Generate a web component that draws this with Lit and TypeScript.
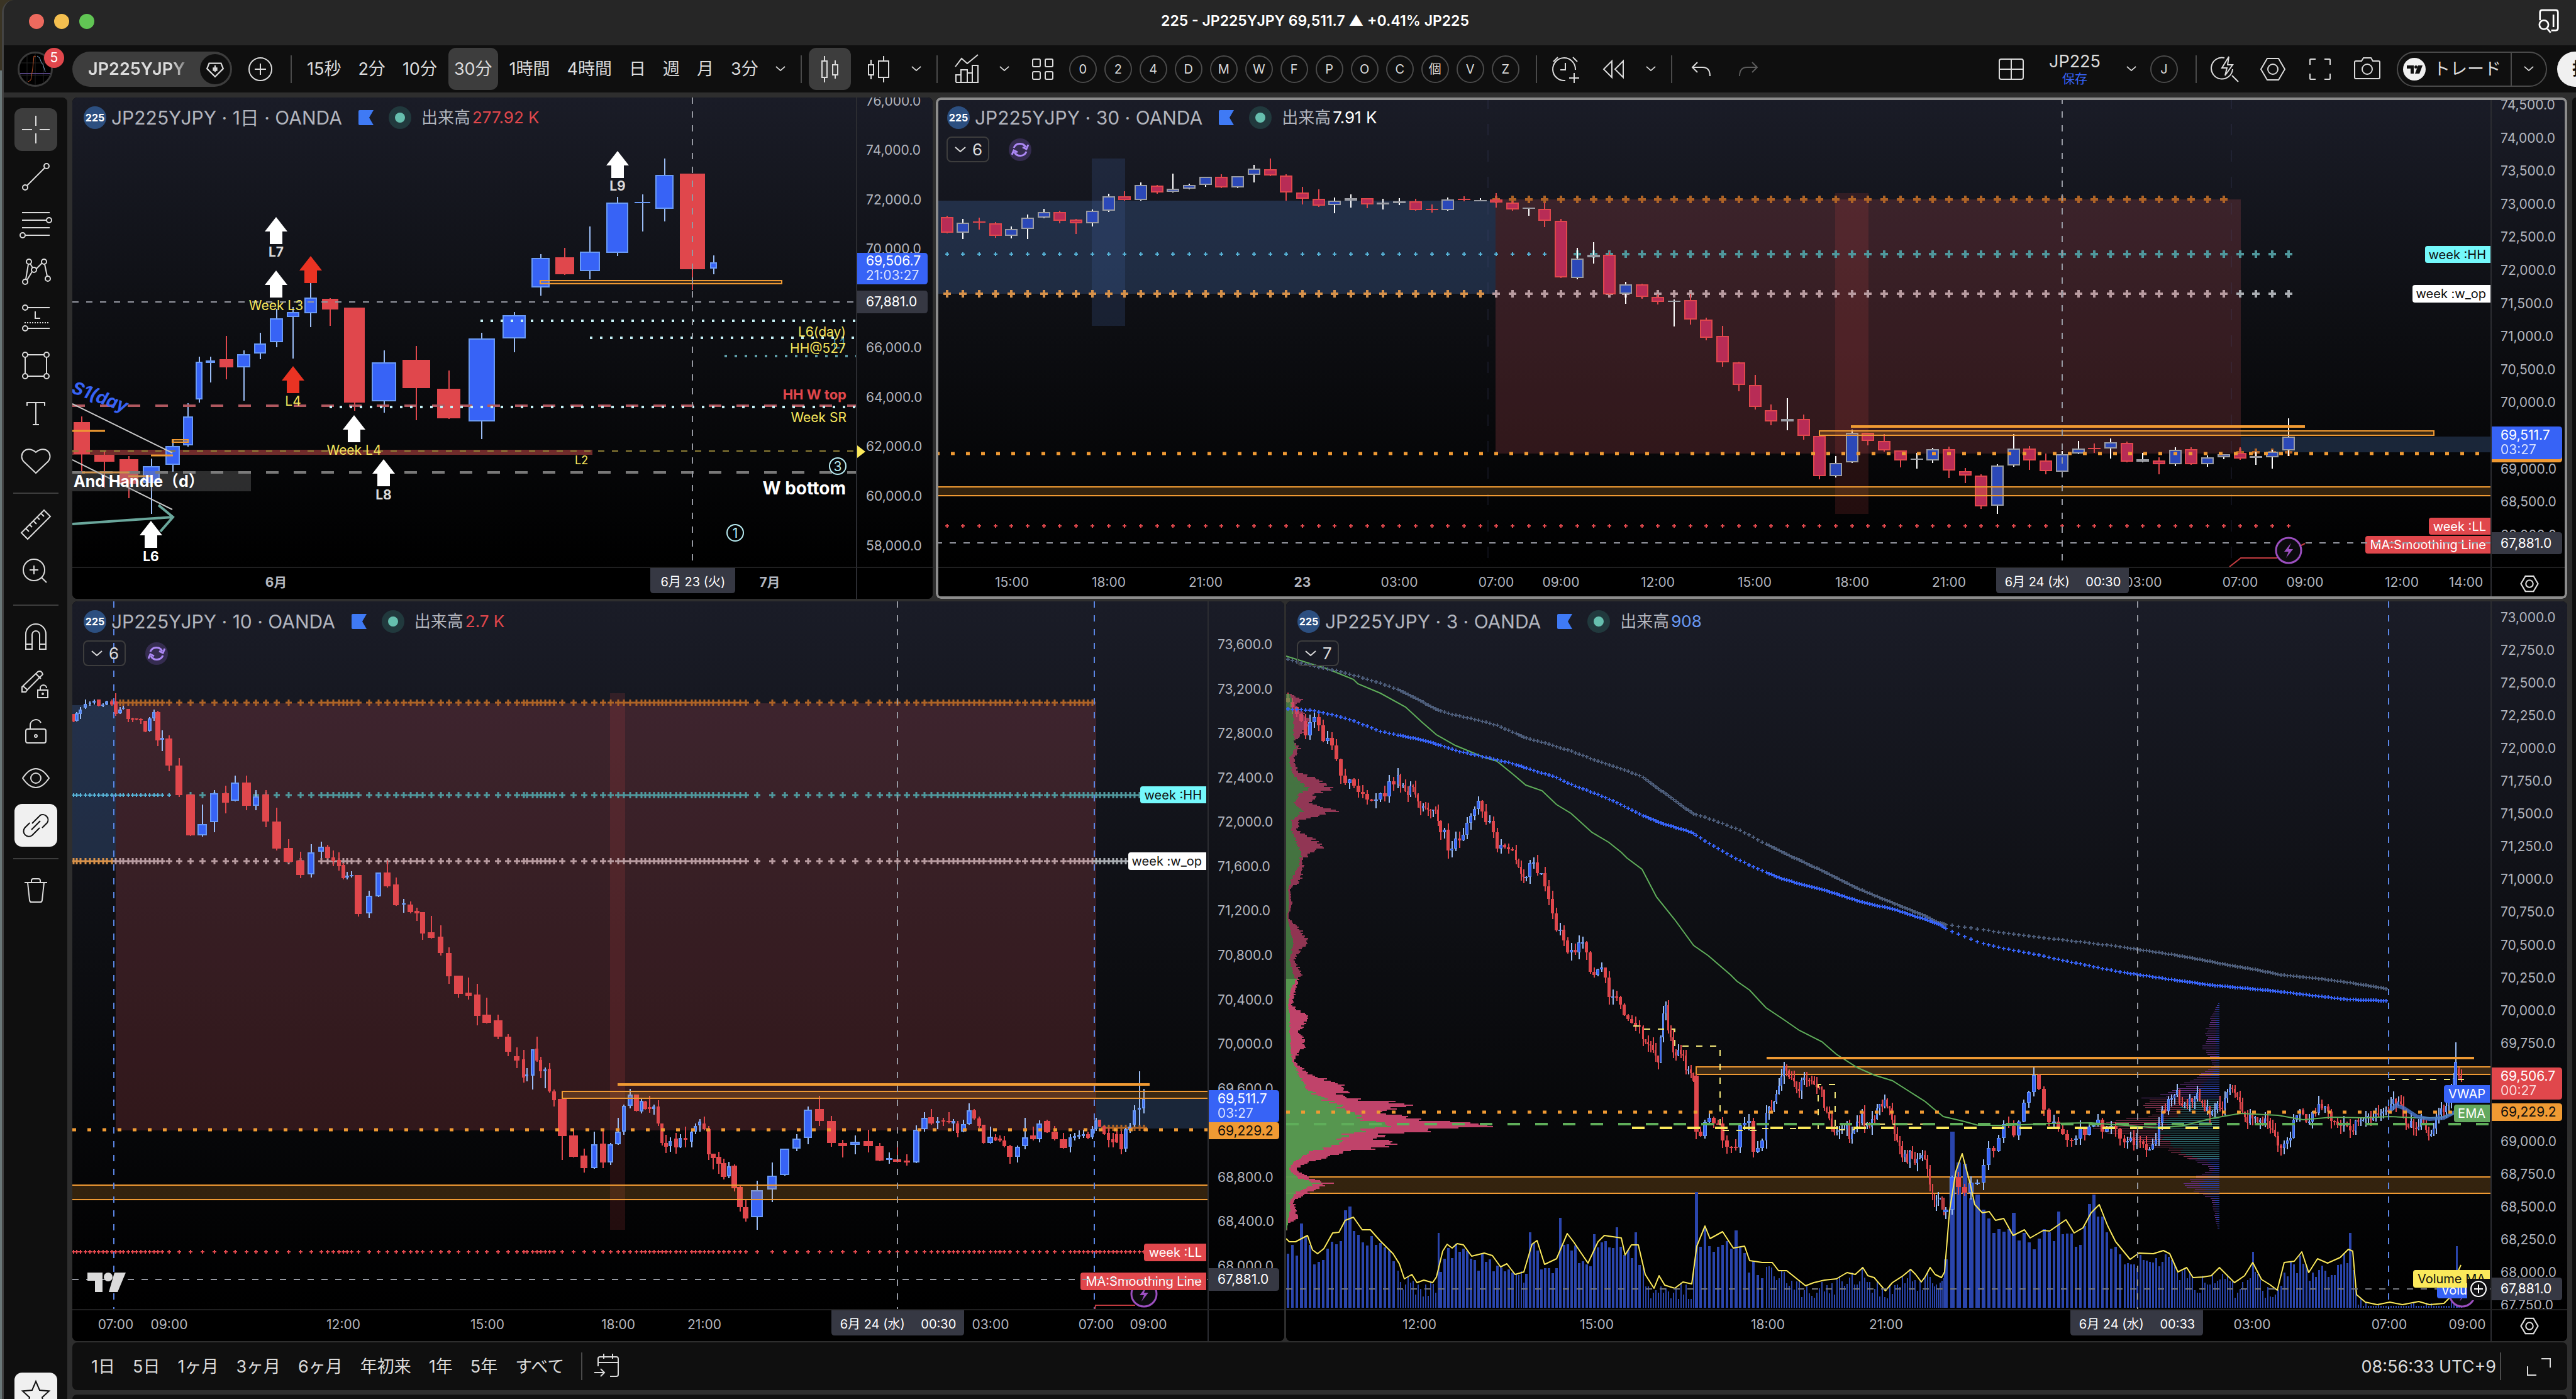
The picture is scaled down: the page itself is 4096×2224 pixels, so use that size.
import { LitElement, html, svg, css, nothing } from "lit";
import { customElement, property } from "lit/decorators.js";

/* ---------- scales and path helpers ---------- */

type Scale = (v: number) => number;
const lin = (a: number, b: number): Scale => (v) => Math.round(a + b * v);

const topY = lin(-16, 0.5197);
const lowY = lin(-12, 0.8163);

const dayA = lin(-15.6, 0.4436);
const dayB = lin(660.1, 0.4563);
const m30A = lin(-6.4, 0.8365);
const m30B = lin(1295.4, 0.8378);
const m10A = lin(-15.6, 0.6337);
const m10B = lin(928.4, 0.6401);
const m3A = lin(-7.9, 0.6591);
const m3B = lin(1015.6, 0.6604);

interface Candle { x: number; w: number; top: number; bot: number; hi: number; lo: number; kind: string; }

const nums = (s: string) => s.trim().split(/[\s,]+/).map(Number);

/* rows: kind left right top bottom high low */
function spanCandles(rows: string, x: Scale, y: Scale): Candle[] {
  return rows.trim().split(";").map((r) => {
    const [kind, ...p] = r.trim().split(" ");
    const [l, rt, t, b, h, lo] = p.map(Number);
    const left = x(l), right = x(rt);
    return { x: Math.round((left + right) / 2), w: right - left, top: y(t), bot: y(b), hi: y(h), lo: y(lo), kind };
  });
}

/* rows: kind centre half-width top bottom [high low] */
function midCandles(rows: string, x: Scale, y: Scale, k: number): Candle[] {
  return rows.trim().split(";").map((r) => {
    const [kind, ...p] = r.trim().split(" ");
    const [c, hw, t, b, h = t, lo = b] = p.map(Number);
    return { x: x(c), w: Math.max(3, Math.round(hw * 2 * k)), top: y(t), bot: y(b), hi: y(h), lo: y(lo), kind };
  });
}

const box = (x: number, y: number, w: number, h: number) => `M${x} ${y}h${w}v${h}h${-w}z`;

function drawCandles(list: Candle[], kind: string, cls: string, edge: number) {
  let wick = "", body = "", core = "";
  for (const c of list) {
    if (c.kind !== kind) continue;
    const l = c.x - Math.round(c.w / 2);
    const h = Math.max(2, c.bot - c.top);
    wick += box(c.x - 1, c.hi, 2, Math.max(1, c.top - c.hi)) + box(c.x - 1, c.bot, 2, Math.max(1, c.lo - c.bot));
    body += box(l, c.top, c.w, h);
    if (edge && h > edge * 2 && c.w > edge * 2) core += box(l + edge, c.top + edge, c.w - edge * 2, h - edge * 2);
  }
  return svg`<path class="${cls}-wick" d=${wick}></path><path class="${cls}-edge" d=${body}></path><path class="${cls}-core" d=${core}></path>`;
}

const plus = (xs: number[], y: number, r: number) => xs.map((x) => `M${x - r} ${y}h${2 * r}M${x} ${y - r}v${2 * r}`).join("");
const pairs = (s: string, x: Scale, y: Scale): [number, number][] => {
  const n = nums(s);
  const out: [number, number][] = [];
  for (let i = 0; i < n.length; i += 2) out.push([x(n[i]), y(n[i + 1])]);
  return out;
};
const poly = (p: [number, number][]) => p.map(([x, y]) => `${x},${y}`).join(" ");
function at(p: [number, number][], x: number) {
  for (let i = 1; i < p.length; i++) {
    if (x <= p[i][0]) {
      const [x0, y0] = p[i - 1], [x1, y1] = p[i];
      return y0 + ((y1 - y0) * (x - x0)) / Math.max(1, x1 - x0);
    }
  }
  return p[p.length - 1][1];
}
const noise = (i: number) => {
  const v = Math.sin(i * 127.1 + 11.7) * 43758.5453;
  return v - Math.floor(v);
};

const text = (x: number, y: number, s: string, cls = "", anchor = "start") =>
  svg`<text x=${x} y=${y} class=${cls} text-anchor=${anchor}>${s}</text>`;
const hline = (x1: number, x2: number, y: number, cls: string) => svg`<line x1=${x1} x2=${x2} y1=${y} y2=${y} class=${cls}></line>`;
const vline = (x: number, cls: string) => svg`<line x1=${x} x2=${x} y1="0" y2="100%" class=${cls}></line>`;
const rect = (x1: number, y1: number, x2: number, y2: number, cls: string) =>
  svg`<rect x=${x1} y=${y1} width=${x2 - x1} height=${y2 - y1} class=${cls}></rect>`;
function tag(right: number, y1: number, w: number, h: number, s: string, cls: string) {
  return svg`<path class=${cls} d="M${right} ${y1}v${h}h${4 - w}q-4 0 -4 -4v${8 - h}q0 -4 4 -4z"></path>${text(right - 7, y1 + Math.round(h / 2) + 7, s, cls + "-t f20", "end")}`;
}
const arrow = (x: number, y: number, cls: string) =>
  svg`<path class=${cls} d="M${x} ${y}l18 23h-8v20h-20v-20h-8z"></path>`;
const bolt = (x: number, y: number) =>
  svg`<g class="bolt"><circle cx=${x} cy=${y} r="20"></circle><path d="M${x + 4} ${y - 12}l-11 14h7l-4 10l11 -14h-7z"></path></g>`;

const FAR = 4000;

/* ---------- day chart ---------- */

const day = [
  ...spanCandles(`r 40 99 1023 1121 1006 1175;r 114 186 1124 1145 1112 1224;r 204 271 1138 1212 1128 1256;b 288 348 1158 1211 1136 1304;b 368 420 1097 1154 1075 1176;b 433 467 1007 1095 966 1098;b 476 501 839 955 824 964;b 514 548 835 842 824 903;r 562 612 832 857 761 893;b 626 673 816 856 805 958;b 686 729 783 814 750 832;b 742 790 707 779 677 795;b 803 850 686 703 672 830;b 866 913 643 691 599 734;r 930 988 646 679 644 729;r 1008 1084 673 964 673 989;b 1108 1195 840 961 805 994;r 1219 1317 834 920 790 1017;r 1342 1427 922 1013 866 1015;b 1455 1551 768 1022 751 1075`, dayA, topY),
  ...spanCandles(`b 53 134 697 768 686 811;b 153 217 521 611 509 637;r 237 303 520 572 491 572;b 321 393 502 561 425 587;b 415 491 353 506 335 516;b 512 568 351 353 327 440;b 585 648 267 372 218 409;r 671 758 264 556 264 620;b 776 800 535 554 514 572`, dayB, topY),
];

function dayPlot() {
  const x = dayA, z = dayB, y = topY;
  return svg`
    ${rect(0, y(1109), z(366), y(1123), "redband")}
    ${drawCandles(day, "r", "red", 0)}${drawCandles(day, "b", "blue", 2)}
    ${hline(0, FAR, y(973), "rose")}
    ${hline(x(958), FAR, y(977), "dots ice")}
    ${hline(x(1499), FAR, y(713), "dots ice")}
    ${hline(z(358), FAR, y(765), "dots ice")}
    ${hline(z(825), FAR, y(822), "dots teal")}
    ${hline(0, FAR, y(1113), "gold")}
    ${hline(0, FAR, y(1178), "thick")}
    ${hline(x(36), x(152), y(1051), "orange")}${hline(x(68), x(240), y(1178), "orange")}
    ${hline(x(235), x(320), y(1190), "orange")}${hline(x(316), x(395), y(1125), "orange")}
    ${rect(x(394), y(1077), x(450), y(1086), "obox")}
    <polyline class="trend" points="0,${y(968)} ${x(394)},${y(1118)}"></polyline>
    <polyline class="trend" points="0,${y(1140)} ${x(394)},${y(1292)}"></polyline>
    <path class="mint" d="M0 ${y(1335)}L${x(395)} ${y(1315)}M${x(343)} ${y(1278)}L${x(395)} ${y(1315)}L${x(350)} ${y(1358)}"></path>
    ${rect(0, y(1174), x(676), y(1235), "note")}
    ${text(2, y(1222), "And Handle（d）", "white bold f25")}
    <text x="-3" y=${y(936)} class="s1" transform="rotate(20 0 ${y(936)})">S1(day</text>
    ${rect(z(184), y(590), z(1025), y(601), "obox")}
    ${hline(0, FAR, y(656), "cross")}${vline(z(714), "cross")}
    ${arrow(x(766), y(397), "wfill")}${text(x(766), y(518), "L7", "soft bold", "middle")}
    ${arrow(x(766), y(559), "wfill")}${text(x(766), y(682), "Week L3", "yellow", "middle")}
    ${arrow(x(889), y(515), "rfill")}
    ${arrow(x(826), y(852), "rfill")}${text(x(826), y(973), "L4", "yellow", "middle")}
    ${arrow(x(1046), y(1003), "wfill")}${text(x(1046), y(1124), "Week L4", "yellow", "middle")}
    ${arrow(x(1151), y(1138), "wfill")}${text(x(1151), y(1261), "L8", "soft bold", "middle")}
    ${arrow(x(318), y(1326), "wfill")}${text(x(318), y(1448), "L6", "white bold", "middle")}
    ${arrow(z(453), y(194), "wfill")}${text(z(453), y(316), "L9", "soft bold", "middle")}
    ${text(z(1247), y(798), "L1", "tealt", "end")}
    ${text(z(1250), y(762), "L6(day)", "yellow", "end")}
    ${text(z(1250), y(812), "HH@527", "yellow", "end")}
    ${text(z(1251), y(955), "HH W top", "redt bold f22", "end")}
    ${text(z(1251), y(1024), "Week SR", "yellow", "end")}
    ${text(z(304), y(1153), "L2", "yellow f18")}
    ${text(z(1248), y(1244), "W bottom", "white bold f28", "end")}
    <circle class="ring" cx=${z(1221)} cy=${y(1159)} r="13"></circle>${text(z(1221), y(1174), "3", "icet", "middle")}
    <circle class="ring" cx=${z(864)} cy=${y(1363)} r="13"></circle>${text(z(864), y(1378), "1", "icet", "middle")}`;
}

/* ---------- 30 minute chart ---------- */

const m30x = (i: number) => Math.round(17.5 + 25.7 * i);
const m30 = `r 397 444 392 444;b 413 444 403 463;r 409 412 398 434;r 416 454 411 459;b 433 454 425 461;b 399 432 388 463;b 381 399 371 399;r 381 408 378 415;r 405 416 402 448;b 378 416 374 426;b 332 378 325 381;r 332 345 317 345;b 299 344 291 344;r 301 322 298 325;b 310 320 264 322;b 299 310 294 310;b 273 299 273 304;r 273 306 266 306;b 271 305 271 305;b 248 268 237 290;r 250 270 218 270;r 270 322 266 347;r 322 341 304 358;r 341 362 312 366;b 347 360 337 384;b 339 347 327 367;r 338 358 338 369;g 353 358 340 373;g 349 355 338 360;r 349 376 340 376;r 371 374 358 382;b 343 376 337 376;r 340 343 333 348;g 345 347 338 347;r 343 353 323 367;r 353 374 346 377;g 367 369 367 392;r 372 408 352 428;r 408 582 402 582;b 523 583 491 587;b 512 520 474 539;r 512 633 502 633;b 603 632 595 662;r 603 641 600 646;r 641 657 633 664;g 653 657 648 732;r 651 710 632 725;r 710 765 704 774;r 760 840 730 855;r 840 911 838 929;r 911 978 880 985;r 988 1022 969 1034;b 1014 1022 950 1048;r 1014 1066 1000 1078;r 1066 1190 1066 1198;b 1148 1190 1127 1193;b 1057 1146 1046 1149;r 1057 1081 1057 1094;r 1081 1110 1060 1115;r 1110 1141 1110 1163;g 1136 1139 1117 1166;b 1107 1141 1102 1149;r 1107 1171 1098 1195;r 1173 1187 1165 1210;r 1188 1282 1184 1289;b 1156 1280 1153 1304;b 1104 1156 1060 1160;r 1104 1142 1096 1170;r 1141 1173 1120 1184;b 1122 1175 1112 1175;b 1104 1120 1082 1120;r 1102 1104 1089 1118;b 1085 1104 1073 1136;r 1087 1144 1084 1144;g 1138 1144 1118 1147;r 1141 1152 1132 1184;b 1108 1152 1101 1159;r 1106 1152 1101 1155;b 1131 1152 1126 1161;b 1122 1131 1122 1138;r 1117 1135 1101 1140;g 1128 1134 1115 1155;b 1114 1131 1108 1166;b 1067 1110 1013 1127`
  .split(";").map((r, i): Candle => {
    const [kind, ...p] = r.split(" ");
    const [t, b, h, l] = p.map(Number);
    return { x: m30x(i), w: 20, top: topY(t), bot: topY(b), hi: topY(h), lo: topY(l), kind };
  });

const range = (a: number, b: number) => Array.from({ length: b - a + 1 }, (_, i) => a + i);

function m30Plot() {
  const x = m30A, z = m30B, y = topY;
  const bars = (a: number, b: number) => range(a, b).map(m30x);
  return svg`
    ${rect(0, y(347), x(1072), y(631), "bluezone")}
    ${rect(x(304), y(218), x(367), y(730), "bluestrip")}
    ${rect(x(1072), y(343), z(930), y(1120), "redzone")}
    ${rect(z(161), y(323), z(224), y(1304), "redstrip")}
    ${rect(z(930), y(1067), FAR, y(1116), "bluezone2")}
    ${vline(x(1057), "ghost")}${vline(z(913), "ghost")}
    <path class="plus p4 c-amber" d=${plus(bars(34, 79), y(342), 6)}></path>
    <path class="plus p2 c-sky" d=${plus(bars(0, 37), y(510), 3)}></path>
    <path class="plus p4 c-teal" d=${plus(bars(38, 83), y(510), 6)}></path>
    <path class="plus p4 c-orange" d=${plus(bars(0, 33), y(631), 6)}></path>
    <path class="plus p4 c-pink" d=${plus(bars(34, 80), y(631), 6)}></path>
    <path class="plus p4 c-silver" d=${plus(bars(80, 83), y(631), 6)}></path>
    <path class="plus p4 c-amber" d=${plus(bars(80, 83), y(1116), 6)}></path>
    <path class="plus p2 c-red" d=${plus(bars(0, 83), y(1342), 3)}></path>
    <g class="m30">${drawCandles(m30, "r", "pink", 2)}${drawCandles(m30, "b", "navy", 2)}${drawCandles(m30, "g", "grey", 0)}</g>
    ${rect(-10, y(1222), FAR, y(1248), "band")}
    ${hline(z(191), z(1052), y(1037), "orange w4")}
    ${rect(z(131), y(1051), z(1297), y(1064), "obox")}
    ${hline(0, FAR, y(1120), "odots")}
    <polyline class="ma" points="${z(909)},${y(1466)} ${z(930)},${y(1440)} ${z(998)},${y(1440)} ${z(1052)},${y(1395)}"></polyline>
    ${tag(2472, y(484), 104, 27, "week :HH", "tcyan")}
    ${tag(2472, y(604), 124, 28, "week :w_op", "twhite")}
    ${tag(2472, y(1316), 98, 27, "week :LL", "tred")}
    ${tag(2472, y(1371), 199, 28, "MA:Smoothing Line", "tred")}
    ${hline(0, FAR, y(1394), "cross")}${vline(z(592), "cross")}
    ${bolt(z(1021), y(1417))}`;
}

/* ---------- 10 minute chart ---------- */

const m10 = [
  ...midCandles(`r 27 3 234 249;b 36 5 233 247 230 249;b 45 4 225 234 221 244;b 58 4 214 222 206 224;b 69 3 212 213 209 218;b 80 4 208 212 206 215;r 91 5 206 218;b 102 4 215 217 213 220;b 112 4 210 216 208 216;r 124 5 210 216 206 218;r 133 5 210 234 194 238;b 144 5 225 233 220 233;b 153 3 222 224 218 226;r 165 5 224 244 224 250;r 176 4 243 245 241 250;r 186 5 243 245;r 197 5 244 246 242 254;r 208 5 247 268;b 218 5 242 267 240 267;b 229 4 230 242 225 248;r 239 6 230 286 228 296;b 250 5 281 284 266 306;r 268 9 282 334 276 346;r 293 9 334 392 320 396;r 321 11 391 470;b 351 12 448 470 411 473;b 382 10 388 445 382 464;r 409 9 388 407 374 428;b 434 10 368 403 354 403;r 461 11 368 413 354 422;b 486 8 394 413 382 422;r 511 9 391 443 382 455;r 538 11 443 496 416 500;r 567 12 495 522 478 524;r 597 10 520 548 502 554;b 625 9 504 546 488 553;b 649 7 492 502 483 514;r 666 6 492 515 489 516;r 680 5 513 521 500 531;r 693 5 518 530 504 539;r 704 5 528 554 524 556;b 715 5 549 552 541 556;b 726 5 547 549 540 553;r 743 9 548 623 548 628;b 769 8 588 622 578 631;b 793 7 543 589;r 815 9 543 570 520 572;r 837 7 566 606 553 606;b 856 5 603 605 594 621;r 873 7 605 620 599 622;r 889 6 618 622 611 637;r 904 6 620 661 620 674;r 926 9 659 670 627 670;r 950 7 668 699 645 705;r 970 7 699 745 688 759;r 994 11 744 779 744 786;r 1019 8 777 783 747 790;r 1041 8 780 822 760 840;r 1065 11 819 835 786 837;r 1093 11 831 863 819 867;r 1118 8 862 892 857 900;r 1140 7 901 909 883 924;r 1157 4 906 942 888 952;b 1166 4 936 940 924 950;b 1179 5 887 938 887 965;r 1190 4 886 909 862 911;r 1201 4 908 930 902 943;b 1212 4 926 930 923 963;r 1223 4 925 969 914 971;r 1234 5 969 986 965 998;r 1254 11 984 1056 984 1103;r 1283 11 1055 1096 1044 1096;r 1309 9 1094 1119 1080 1127;b 1334 8 1072 1118 1047 1120;r 1356 8 1071 1108 1042 1118;b 1375 7 1072 1107 1070 1112;b 1394 7 1047 1072 1020 1072;b 1409 5 997 1047 995 1053;b 1425 6 975 997 964 1002;r 1440 6 975 1007;b 1452 5 987 1008 984 1012;r 1462 5 989 1003 987 1004;r 1473 5 1000 1003 978 1011;b 1484 4 999 1003 995 1014;r 1495 4 998 1032 986 1036;r 1505 4 1032 1070 1032 1074;r 1515 5 1069 1077 1053 1089;b 1525 4 1066 1076 1058 1086;r 1539 5 1061 1078 1050 1090;b 1550 4 1060 1078 1052 1078;r 1563 5 1060 1063 1037 1078`, m10A, lowY, 0.634),
  ...midCandles(`b 88 4 1048 1067 1044 1078;b 98 4 1036 1048 1031 1052;b 108 4 1028 1035 1023 1048;r 119 4 1031 1043 1018 1045;r 130 5 1042 1092 1036 1103;r 142 6 1090 1099 1090 1121;r 155 6 1097 1110 1087 1130;r 168 7 1109 1136 1100 1140;b 181 5 1115 1134 1106 1138;r 195 7 1114 1158 1111 1164;r 209 7 1155 1195 1150 1203;r 223 7 1194 1216 1178 1223;b 251 15 1161 1214 1143 1238;b 288 12 1133 1160 1108 1185;b 319 12 1081 1132;b 349 10 1061 1081 1052 1085;b 377 10 1004 1060 998 1072;r 406 11 1003 1027 978 1036;r 436 11 1026 1070 1017 1077;r 463 11 1070 1075 1063 1098;b 495 12 1067 1073 1055 1091;r 527 12 1066 1075 1044 1088;r 555 10 1075 1104 1069 1104;b 579 8 1099 1102 1088 1110;r 600 10 1101 1106 1075 1108;r 622 8 1104 1108 1091 1113;b 646 8 1044 1107 1035 1109;b 666 8 1020 1042 1009 1048;r 684 7 1019 1032 1003 1034;b 700 5 1026 1030 1019 1042;r 713 5 1025 1028 1020 1036;r 727 6 1026 1029 1010 1032;b 739 5 1026 1031 1023 1046;r 750 4 1032 1050 1026 1059;b 763 6 1033 1048 1024 1048;b 778 6 1006 1033 992 1034;r 790 5 1006 1022 1003 1024;r 802 5 1022 1036 1018 1040;r 814 5 1034 1070;b 830 7 1057 1069 1038 1071;r 843 5 1058 1064 1052 1066;r 854 5 1061 1064 1055 1067;r 865 5 1064 1076 1056 1078;r 879 7 1076 1096 1073 1110;b 897 6 1077 1096 1074 1107;b 917 8 1058 1076 1020 1082;r 937 7 1055 1062 1038 1064;b 953 7 1031 1062 1025 1068;r 971 8 1027 1049 1024 1050;r 990 8 1048 1062 1036 1064;r 1012 9 1062 1079 1050 1080;b 1029 4 1058 1077 1052 1088;b 1040 4 1056 1060 1050 1064;b 1051 4 1053 1057 1045 1062;b 1062 4 1052 1056 1044 1060;r 1073 5 1052 1060 1048 1062;b 1083 4 1043 1058 1036 1062;b 1093 4 1025 1043 1021 1046;r 1103 4 1024 1038;r 1114 4 1036 1052;r 1124 4 1050 1063 1040 1078;r 1135 4 1062 1068 1050 1078;r 1145 4 1052 1068 1046 1070;r 1156 5 1052 1082 1046 1092;b 1166 5 1042 1081 1040 1086;b 1177 4 1038 1044 1030 1050;b 1188 4 1006 1034 996 1037;b 1200 4 1001 1004 930 1035;b 1211 4 984 1002 964 1012`, m10B, lowY, 0.64),
];

function m10Plot() {
  const x = m10A, z = m10B, y = lowY;
  const xs = m10.map((c) => c.x);
  const within = (a: number, b: number) => xs.filter((v) => v >= a && v <= b);
  return svg`
    ${rect(0, y(217), x(133), y(521), "bluezone")}
    ${rect(x(133), y(213), z(1093), y(1045), "redzone")}
    ${rect(x(1374), y(194), x(1411), y(1238), "redstrip")}
    ${rect(z(1093), y(984), FAR, y(1041), "bluezone2")}
    <path class="plus p3 c-amber" d=${plus(within(x(137), z(1088)), y(212), 5)}></path>
    <path class="plus p2 c-sky" d=${plus(within(0, x(270)), y(392), 3)}></path>
    <path class="plus p3 c-teal" d=${plus(within(x(318), FAR), y(392), 5)}></path>
    <path class="plus p3 c-orange" d=${plus(within(0, x(128)), y(521), 5)}></path>
    <path class="plus p3 c-pink" d=${plus(within(x(130), z(1090)), y(521), 5)}></path>
    <path class="plus p3 c-silver" d=${plus(within(z(1090), FAR), y(521), 5)}></path>
    <path class="plus p3 c-amber" d=${plus(within(z(1110), FAR), y(1040), 5)}></path>
    <path class="plus p2 c-red" d=${plus(within(0, FAR), y(1281), 3)}></path>
    ${drawCandles(m10, "r", "red", 0)}${drawCandles(m10, "b", "blue", 2)}
    ${rect(-10, y(1151), FAR, y(1180), "band")}
    ${hline(x(1392), z(1225), y(955), "orange w4")}
    ${rect(x(1254), y(969), FAR, y(983), "obox")}
    ${hline(0, FAR, y(1044), "odots")}
    ${vline(x(128), "session")}${vline(z(1088), "session")}${vline(z(600), "cross")}
    <polyline class="ma" points="${z(1090)},${y(1393)} ${z(1091)},${y(1385)} ${z(1190)},${y(1385)}"></polyline>
    ${bolt(z(1211), y(1363))}
    ${tag(1803, y(375), 105, 27, "week :HH", "tcyan")}
    ${tag(1803, y(504), 124, 28, "week :w_op", "twhite")}
    ${tag(1803, y(1265), 99, 28, "week :LL", "tred")}
    ${tag(1803, y(1322), 200, 28, "MA:Smoothing Line", "tred")}
    ${hline(0, FAR, y(1335), "cross")}
    <g class="mark"><path d="M24 1067h24v31h-12v-18h-12z"></path><circle cx="57" cy="1074" r="7"></circle><path d="M67 1067h18l-13 31h-14z"></path></g>`;
}

/* ---------- 3 minute chart ---------- */

const priceA = pairs(`14 205 22 212 35 225 45 250 55 268 66 262 76 240 88 240 98 270 108 292 118 275 128 300 140 335 150 370 163 350 175 365 185 388 200 396 216 402 228 412 238 390 250 390 258 372 270 362 280 356 290 372 305 382 318 380 330 400 340 418 355 422 375 425 385 465 393 460 402 500 410 513 420 480 430 488 438 465 450 432 462 425 472 400 482 412 495 452 505 440 514 478 528 495 540 488 552 505 565 510 575 535 583 565 595 540 607 525 618 545 628 545 640 580 652 610 660 650 675 660 690 690 705 702 714 680 724 680 736 700 748 735 758 742 768 720 780 735 792 780 802 778 815 785 828 815 840 828 855 830 865 845 880 880 890 885 900 890 910 905 920 830 927 800 935 850 945 880 953 905 962 880 975 915 985 940 995 940 1001 1045 1012 1050 1022 1025 1035 1025 1050 1030 1062 1060 1075 1080 1090 1085 1100 1080 1110 1020 1125 1020 1140 1085 1155 1080 1172 1010 1185 1005 1200 970 1212 930 1220 925 1232 950 1245 965 1260 945 1272 940 1285 960 1300 955 1312 1000 1325 1030 1335 1050 1350 1048 1365 1030 1370 1055 1385 1045 1400 1015 1415 1040 1435 1010 1445 995 1457 985 1470 1010 1483 1060 1495 1085 1510 1105 1520 1085 1535 1110 1548 1090 1558 1120`, m3A, lowY);
const priceB = pairs(`3 1105 10 1130 25 1190 36 1180 47 1208 60 1145 75 1140 90 1160 105 1150 117 1148 130 1150 143 1110 155 1070 166 1080 178 1060 190 1040 205 1045 218 1050 230 1010 243 985 253 955 264 940 273 970 285 990 295 1030 312 1035 330 1045 345 1055 362 1065 372 1045 385 1050 400 1035 412 1020 422 1035 440 1045 460 1045 475 1060 490 1070 505 1070 515 1055 528 1085 545 1080 555 1060 565 1020 580 1000 592 985 605 970 620 1000 640 990 660 980 675 1000 685 1010 697 1020 705 990 715 1000 730 960 745 970 760 1000 775 1025 790 1020 805 1020 825 1030 840 1050 860 1085 875 1070 890 1030 900 995 910 1015 920 1020 935 1015 945 995 960 1000 975 1010 990 1035 1005 1030 1025 1045 1040 1030 1060 1020 1080 1015 1100 1018 1115 1010 1130 990 1145 1000 1160 1025 1180 1045 1200 1025 1218 1060 1232 1030 1250 1000 1265 980 1277 920 1290 940 1295 930`, m3B, lowY);
const price = [...priceA, ...priceB];

/* bar pitch by horizontal position */
const pitches: [number, number][] = [
  [m3A(280), 7], [m3A(380), 4], [m3A(560), 6], [m3A(590), 4], [m3A(870), 6], [m3A(1000), 4], [m3A(1170), 7], [m3A(1568), 4],
  [m3B(50), 3], [m3B(140), 10], [m3B(300), 8], [m3B(480), 7], [m3B(600), 5], [m3B(850), 4], [m3B(1030), 5], [m3B(1296), 4],
];
const steps: { x: number; p: number }[] = [];
for (let x = 3; x < m3B(1296); ) {
  const p = pitches.find(([end]) => x < end)?.[1] ?? 4;
  steps.push({ x, p });
  x += p;
}
let close = at(price, 0);
const m3: Candle[] = steps.map(({ x, p }, i) => {
  const open = close;
  close = at(price, x) + (noise(i) - 0.5) * 16;
  const top = Math.round(Math.min(open, close)), bot = Math.round(Math.max(open, close));
  return {
    x, w: Math.max(2, Math.round(p * 0.8)), top, bot,
    hi: top - Math.round(noise(i + 500) * 13), lo: bot + Math.round(noise(i + 900) * 13),
    kind: close > open ? "r" : "b",
  };
});
m3.push({ x: m3B(1278), w: 5, top: lowY(912), bot: lowY(960), hi: lowY(874), lo: lowY(985), kind: "b" });

const volMa = [
  ...pairs(`12 1256 20 1262 35 1262 64 1250 75 1278 88 1285 103 1275 125 1245 140 1243 155 1220 175 1214 195 1238 215 1238 240 1260 270 1285 285 1305 297 1334 315 1325 328 1342 345 1337 365 1342 375 1330 390 1280 400 1267 412 1274 425 1266 440 1268 460 1290 490 1284 510 1289 530 1311 545 1305 565 1326 585 1320 605 1267 617 1259 635 1306 665 1295 690 1246 705 1262 740 1303 765 1262 780 1250 820 1255 830 1288 845 1268 862 1268 878 1325 900 1352 912 1328 925 1346 950 1353 970 1340 990 1344 1003 1270 1022 1231 1035 1256 1065 1242 1090 1274 1118 1270 1130 1298 1160 1302 1185 1302 1200 1318 1220 1318 1235 1328 1265 1348 1285 1342 1310 1336 1340 1334 1365 1322 1385 1325 1403 1312 1415 1328 1430 1332 1458 1357 1475 1342 1500 1328 1518 1316 1530 1325 1545 1340`, m3A, lowY),
  ...pairs(`0 1330 12 1312 25 1325 40 1332 48 1320 60 1200 75 1125 90 1090 110 1150 120 1190 138 1205 155 1203 170 1220 190 1217 212 1250 240 1238 253 1254 285 1240 300 1241 340 1219 360 1245 380 1235 400 1205 420 1190 440 1230 460 1262 495 1296 515 1284 550 1285 575 1279 590 1285 610 1320 630 1312 645 1332 670 1330 690 1328 710 1312 745 1342 770 1328 790 1302 810 1335 830 1345 848 1356 865 1302 890 1300 908 1282 925 1322 945 1295 970 1303 1000 1293 1020 1276 1030 1280 1040 1365 1060 1380 1090 1384 1120 1380 1150 1384 1190 1378 1215 1384 1250 1382 1265 1370 1280 1325 1291 1307`, m3B, lowY),
];
const spikes = [
  ...pairs("44 1226 150 1200 161 1193 382 1245 597 1243 676 1215 758 1247 810 1234 852 1244 1002 1165 1101 1240", m3A, lowY),
  ...pairs("60 1048 76 1108 91 1110 105 1177 130 1170 143 1199 219 1205 317 1203 398 1188 410 1170 788 1282 1021 1245 1278 1270", m3B, lowY),
];
const volBase = lowY(1391);
const volumePath = steps.map(({ x, p }, i) => {
  const w = Math.max(1, Math.round(p * 0.6));
  const top = Math.min(volBase - 3, Math.round(at(volMa, x) + 6 + (noise(i + 77) - 0.3) * 28));
  return box(x - Math.floor(w / 2), top, w, volBase - top);
}).join("") + spikes.map(([x, t]) => {
  const near = steps.reduce((a, b) => (Math.abs(b.x - x) < Math.abs(a.x - x) ? b : a));
  const w = Math.max(3, Math.round(near.p * 0.7));
  return box(near.x - Math.floor(w / 2), t, w, volBase - t);
}).join("");

/* volume profile keys: row total inner */
function profile(keys: string, x: number, k: number, dir: number, from: number, to: number, step: number, thick: number) {
  const n = nums(keys);
  const total: [number, number][] = [], inner: [number, number][] = [];
  for (let i = 0; i < n.length; i += 3) {
    total.push([lowY(n[i]), n[i + 1] * k]);
    inner.push([lowY(n[i]), n[i + 2] * k]);
  }
  let a = "", b = "";
  for (let y = lowY(from), i = 0; y < lowY(to); y += step, i++) {
    const f = 0.8 + 0.25 * noise(i + from);
    const t = Math.max(2, Math.round(at(total, y) * f)), g = Math.max(1, Math.round(at(inner, y) * f));
    a += box(x, y, dir * t, thick);
    b += box(x, y, dir * g, thick);
  }
  return [a, b];
}
const leftKeys = "195 15 10 205 40 15 215 25 15 245 60 20 270 45 20 285 20 20 300 35 25 320 20 8 345 30 15 360 85 30 377 120 60 390 80 35 405 60 20 422 135 45 440 35 15 460 30 15 490 97 30 505 60 40 520 40 35 535 45 30 555 40 15 575 10 5 600 15 8 630 5 3 655 40 12 675 55 18 695 35 15 712 22 10 740 40 18 750 30 25 770 25 12 800 15 5 825 60 10 850 35 10 880 50 12 905 20 15 930 50 30 945 100 40 962 155 50 980 140 90 990 290 120 1000 310 150 1010 230 170 1020 330 190 1028 440 240 1034 560 280 1042 380 200 1055 230 150 1075 275 120 1085 150 60 1105 60 20 1120 25 8 1135 60 30 1147 110 80 1165 60 25 1180 20 10 1200 25 10 1215 30 5 1225 5 5 1238 2 2";
const nightKeys = "797 3 3 820 20 12 845 32 8 870 35 10 880 45 8 895 30 8 920 15 8 932 40 15 950 80 35 970 120 60 985 200 85 995 180 85 1010 160 110 1025 250 130 1035 300 150 1045 290 150 1060 230 140 1075 170 120 1090 110 90 1105 60 30 1120 20 10 1135 60 30 1150 90 50 1165 60 35 1180 20 12 1200 15 8 1225 8 5 1238 4 3";
const leftDim = profile(leftKeys, 0, 0.659, 1, 195, 750, 2, 2);
const leftLit = profile(leftKeys, 0, 0.659, 1, 750, 1238, 2, 2);
const nightX = m3B(709);
const nightTop = profile(nightKeys, nightX, 0.66, -1, 797, 985, 3, 1);
const nightMid = profile(nightKeys, nightX, 0.66, -1, 985, 1100, 3, 1);
const nightLow = profile(nightKeys, nightX, 0.66, -1, 1100, 1238, 3, 1);

const slate = [
  ...pairs("12 126 40 132 90 143 135 150 190 162 240 174 285 187 330 206 375 225 420 236 470 245 520 256 590 280 640 291 700 306 760 325 820 340 870 356 920 385 970 414 995 429 1040 440 1110 462 1170 487 1240 514 1310 542 1390 573 1460 596 1530 620", m3A, lowY),
  ...pairs("0 627 30 639 60 646 110 650 170 658 250 666 330 674 410 681 470 687 530 695 600 703 660 712 730 723 800 732 860 742 940 749 1020 757 1115 769", m3B, lowY),
];
const azure = [
  ...pairs("12 224 70 227 130 236 180 249 240 268 330 283 370 291 420 305 500 320 560 331 610 344 660 356 700 371 760 390 820 411 870 431 920 447 990 464 1030 485 1090 513 1140 532 1200 552 1250 565 1320 579 1400 600 1480 615 1530 628", m3A, lowY),
  ...pairs("0 633 40 646 60 657 100 669 140 681 190 691 250 700 320 712 400 725 470 736 530 744 600 752 690 762 770 768 850 774 940 783 1020 790 1115 792", m3B, lowY),
];
const ema = [
  ...pairs("12 121 60 133 110 146 175 167 185 175 240 194 300 221 340 250 375 275 420 295 490 318 520 326 560 351 590 372 630 384 665 410 700 427 750 464 790 484 820 503 835 515 870 537 905 590 950 635 995 685 1030 705 1085 742 1100 755 1130 772 1170 806 1210 828 1250 850 1305 872 1340 897 1390 922 1430 937 1475 948 1520 972", m3A, lowY),
  ...pairs("0 989 20 1002 45 1018 90 1026 130 1035 200 1035 300 1032 400 1030 480 1035 560 1040 620 1036 690 1022 760 1012 850 1016 910 1024 980 1019 1060 1020 1120 1018 1180 1021 1240 1020 1275 1012", m3B, lowY),
];
const vwapTail = pairs("1118 1008 1135 996 1155 1002 1185 1018 1215 1023 1250 1020 1275 1010", m3B, lowY);
const marks = (p: [number, number][], end: number) =>
  steps.filter((s) => s.x < end).map((s) => plus([s.x], Math.round(at(p, s.x)), 3)).join("");

function m3Plot() {
  const x = m3A, z = m3B, y = lowY;
  return svg`
    ${rect(-10, y(1136), FAR, y(1168), "band")}
    ${rect(x(1001), y(921), FAR, y(936), "obox")}
    <path class="vol" d=${volumePath}></path>
    <path class="np" d=${nightTop[0] + nightLow[0]}></path><path class="nb" d=${nightTop[1] + nightLow[1]}></path>
    <path class="nr" d=${nightMid[0]}></path><path class="nt" d=${nightMid[1]}></path>
    ${drawCandles(m3, "r", "red", 0)}${drawCandles(m3, "b", "blue", 1)}
    ${rect(x(996), y(938), x(1007), y(1047), "red-edge")}
    <g class="dim"><path class="vp" d=${leftDim[0]}></path><path class="vg" d=${leftDim[1]}></path></g>
    <g class="lit"><path class="vp" d=${leftLit[0]}></path><path class="vg" d=${leftLit[1]}></path></g>
    <polyline class="ema" points=${poly(ema)}></polyline>
    <path class="plus p2 c-slate" d=${marks(slate, z(1115))}></path>
    <path class="plus p2 c-azure" d=${marks(azure, z(1115))}></path>
    <polyline class="vwap" points=${poly(vwapTail)}></polyline>
    <polyline class="steps" points=${poly(pairs("850 841 875 841 875 848 950 848 950 881 1059 881 1059 1045 1156 1045 1156 1041 1296 1041 1296 955 1337 955 1337 1044 1380 1044 1400 1033 1568 1033", x, y))}></polyline>
    ${hline(z(1116), z(1300), y(946), "steps")}
    ${hline(x(1171), z(1323), y(904), "orange w4")}
    ${hline(0, FAR, y(1009), "odots")}
    ${hline(0, FAR, y(1033), "gdash")}
    ${hline(x(847), z(709), y(1040), "ydash")}
    <polyline class="volma" points=${poly(volMa)}></polyline>
    ${hline(0, FAR, y(1354), "cross thin")}
    ${vline(z(512), "cross")}${vline(z(1116), "session")}
    ${bolt(z(1294), y(1364))}
    ${tag(1914, y(957), 73, 28, "VWAP", "tblue")}
    ${tag(1914, y(995), 57, 28, "EMA", "tgreen")}
    ${tag(1914, y(1340), 84, 26, "Volume", "tblue")}
    ${tag(1914, y(1317), 122, 28, "Volume MA", "tyellow")}
    <rect class="plusbg" x="1878" y=${y(1354) - 16} width="36" height="34"></rect>
    <path class="addmark" d="M1896 ${y(1354) - 7}v14M1889 ${y(1354)}h14"></path><circle class="addmark" cx="1896" cy=${y(1354)} r="12"></circle>`;
}

/* ---------- panes ---------- */

interface Label { at: number; s: string; cls?: string; }
interface AxisTag { y: number; h: number; cls: string; lines: string[]; }
interface Pane {
  interval: string; volume: string; volCls: string; count: string; sync: boolean; active: boolean; gear: boolean;
  plot: () => unknown; prices: Label[]; axisTags: AxisTag[]; times: Label[]; cursor: { x: number; w: number; s: string }; pointer?: number;
}

const series = (start: number, stepV: number, first: number, pitch: number, n: number, y: Scale, skip: number[] = []): Label[] =>
  range(0, n - 1).filter((i) => !skip.includes(i)).map((i) => ({
    at: y(first + pitch * i), s: (start - stepV * i).toLocaleString("en-US", { minimumFractionDigits: 1 }),
  }));

const panes: Pane[] = [
  {
    interval: "1日", volume: "277.92 K", volCls: "down", count: "", sync: false, active: false, gear: false, plot: dayPlot,
    prices: series(76000, 2000, 40, 151.1, 10, topY, [4]),
    axisTags: [{ y: topY(507), h: 50, cls: "tblue", lines: ["69,506.7", "21:03:27"] }, { y: topY(621), h: 36, cls: "tgrey", lines: ["67,881.0"] }],
    times: [{ at: dayA(766), s: "6月", cls: "bold" }, { at: dayB(983), s: "7月", cls: "bold" }],
    cursor: { x: dayB(568), w: 135, s: "6月 23 (火)" }, pointer: topY(1115),
  },
  {
    interval: "30", volume: "7.91 K", volCls: "plain", count: "6", sync: true, active: true, gear: true, plot: m30Plot,
    prices: series(74500, 500, 52, 101.2, 14, topY, [10]),
    axisTags: [
      { y: topY(1120), h: 14, cls: "torange", lines: [] },
      { y: topY(1038), h: 52, cls: "tblue", lines: ["69,511.7", "03:27"] },
      { y: topY(1360), h: 35, cls: "tgrey", lines: ["67,881.0"] },
    ],
    times: [
      ...([[152, "15:00"], [336, "18:00"], [520, "21:00"], [889, "03:00"], [1073, "07:00"], [1196, "09:00"], [1380, "12:00"]] as [number, string][]).map(([v, s]) => ({ at: m30A(v), s })),
      { at: m30A(705), s: "23", cls: "bold" },
      ...([[8, "15:00"], [193, "18:00"], [377, "21:00"], [746, "03:00"], [929, "07:00"], [1052, "09:00"], [1236, "12:00"], [1358, "14:00"]] as [number, string][]).map(([v, s]) => ({ at: m30B(v), s })),
    ],
    cursor: { x: m30B(466), w: 211, s: "6月 24 (水)\u2003 00:30" },
  },
  {
    interval: "10", volume: "2.7 K", volCls: "down", count: "6", sync: true, active: false, gear: false, plot: m10Plot,
    prices: series(73600, 400, 98, 86.45, 15, lowY, [11]),
    axisTags: [
      { y: lowY(967), h: 51, cls: "tblue", lines: ["69,511.7", "03:27"] },
      { y: lowY(1029), h: 27, cls: "torange", lines: ["69,229.2"] },
      { y: lowY(1313), h: 36, cls: "tgrey", lines: ["67,881.0"] },
    ],
    times: [
      ...([[133, "07:00"], [268, "09:00"], [704, "12:00"], [1066, "15:00"], [1395, "18:00"]] as [number, string][]).map(([v, s]) => ({ at: m10A(v), s })),
      ...([[120, "21:00"], [831, "03:00"], [1093, "07:00"], [1223, "09:00"]] as [number, string][]).map(([v, s]) => ({ at: m10B(v), s })),
    ],
    cursor: { x: m10B(436), w: 211, s: "6月 24 (水)\u2003 00:30" },
  },
  {
    interval: "3", volume: "908", volCls: "up", count: "7", sync: false, active: false, gear: true, plot: m3Plot,
    prices: series(73000, 250, 45, 63.8, 22, lowY, [14, 15]),
    axisTags: [
      { y: lowY(922), h: 51, cls: "tred", lines: ["69,506.7", "00:27"] },
      { y: lowY(992), h: 28, cls: "torange", lines: ["69,229.2"] },
      { y: lowY(1332), h: 36, cls: "tgrey", lines: ["67,881.0"] },
    ],
    times: [
      ...([[334, "12:00"], [761, "15:00"], [1174, "18:00"], [1459, "21:00"]] as [number, string][]).map(([v, s]) => ({ at: m3A(v), s })),
      ...([[788, "03:00"], [1118, "07:00"], [1306, "09:00"]] as [number, string][]).map(([v, s]) => ({ at: m3B(v), s })),
    ],
    cursor: { x: m3B(351), w: 211, s: "6月 24 (水)\u2003 00:33" },
  },
];

const base = css`
  * { box-sizing: border-box; }
  button, select, input { font: inherit; color: inherit; background: none; border: 0; padding: 0; margin: 0; cursor: pointer; }
  svg { display: block; }
  .ic { width: 56px; height: 56px; fill: none; stroke: currentColor; stroke-width: 1; }
`;

const hexagon = svg`<path d="M9.5 5.5h9l5 8.5l-5 8.5h-9l-5 -8.5z"></path><circle cx="14" cy="14" r="4"></circle>`;

@customElement("chart-pane")
export class ChartPane extends LitElement {
  @property({ attribute: false }) pane!: Pane;

  static styles = [base, css`
    :host { display: block; position: relative; min-width: 0; overflow: hidden; border-radius: 8px; background: #000; }
    .grid { display: grid; grid-template-columns: minmax(0, 1fr) 122px; grid-template-rows: minmax(0, 1fr) 51px; height: 100%; }
    .plot, .prices { position: relative; background: linear-gradient(#1a1c27, #0d0e12 50%, #000); overflow: hidden; }
    .prices, .corner { border-left: 2px solid #2b2c31; }
    .time, .corner { border-top: 2px solid #1f1f20; background: #000; overflow: hidden; }
    .corner { display: grid; place-items: center; color: #dbdbdb; }
    .corner svg { width: 40px; height: 40px; stroke-width: 1.5; }
    .plot > svg, .prices > svg, .time > svg { width: 100%; height: 100%; }
    .frame { position: absolute; inset: 0; border: 4px solid #8c8c8c; border-radius: 8px; pointer-events: none; }
    text { font-family: Inter, "Noto Sans CJK JP", sans-serif; fill: #b2b5be; font-size: 21px; }
    .bold { font-weight: 700; }
    .f18 { font-size: 18px; } .f20 { font-size: 20px; } .f22 { font-size: 22px; } .f25 { font-size: 25px; } .f28 { font-size: 28px; }
    .white { fill: #fff; } .soft { fill: #dbdbdb; } .yellow { fill: #f5e45c; } .redt { fill: #e0474c; } .tealt { fill: #3c8fa8; } .icet { fill: #b8ecf2; }
    .s1 { fill: #3763f6; font-size: 28px; font-weight: 700; font-style: italic; }
    .wfill { fill: #fff; } .rfill { fill: #ea3323; }
    .ring { fill: none; stroke: #b8ecf2; stroke-width: 2; }
    .red-wick, .red-edge { fill: #e0474c; }
    .blue-wick { fill: #9abcf5; } .blue-edge { fill: #6a9af5; } .blue-core { fill: #3763f6; }
    .pink-wick, .pink-edge { fill: #e0474c; } .pink-core { fill: #b82c56; }
    .navy-wick { fill: #fff; } .navy-edge { fill: #9a9ca3; } .navy-core { fill: #2b48b8; }
    .grey-wick { fill: #fff; } .grey-edge { fill: #9a9ca3; }
    .cross { stroke: #9598a1; stroke-width: 2; stroke-dasharray: 10 12; }
    .thin { stroke: #75777e; }
    .session { stroke: #5b86e5; stroke-width: 2; stroke-dasharray: 10 12; }
    .ghost { stroke: rgba(70, 76, 120, 0.2); stroke-width: 2; stroke-dasharray: 18 24; }
    .rose { stroke: #b0585f; stroke-width: 4; stroke-dasharray: 20 24; }
    .thick { stroke: #787878; stroke-width: 4; stroke-dasharray: 20 24; }
    .gold { stroke: #8f7f36; stroke-width: 2; stroke-dasharray: 10 12; }
    .dots { stroke-width: 4; stroke-dasharray: 4 12; } .ice { stroke: #c4f0f5; } .teal { stroke: #5d9aa5; }
    .orange { stroke: #f09a33; stroke-width: 3; } .w4 { stroke-width: 4; }
    .odots { stroke: #f09a33; stroke-width: 5; stroke-dasharray: 6 18; }
    .gdash { stroke: #5fae5a; stroke-width: 4; stroke-dasharray: 20 24; }
    .ydash { stroke: #fbe95b; stroke-width: 4; stroke-dasharray: 20 24; }
    .steps { fill: none; stroke: #f3e779; stroke-width: 2; stroke-dasharray: 10 12; }
    .obox { fill: rgba(240, 154, 51, 0.22); stroke: #f09a33; stroke-width: 2; }
    .band { fill: rgba(240, 154, 51, 0.2); stroke: #f09a33; stroke-width: 2; }
    .redband { fill: #702b2b; }
    .note { fill: rgba(130, 130, 130, 0.32); }
    .trend { stroke: #c8c8c8; stroke-width: 2; fill: none; }
    .mint { stroke: #6aa79c; stroke-width: 4; fill: none; }
    .bluezone { fill: rgba(66, 102, 162, 0.32); } .bluezone2 { fill: #1a2639; } .bluestrip { fill: rgba(72, 106, 176, 0.2); }
    .redzone { fill: rgba(200, 80, 90, 0.22); } .redstrip { fill: rgba(224, 71, 76, 0.15); }
    .plus { fill: none; } .p2 { stroke-width: 2; } .p3 { stroke-width: 3; } .p4 { stroke-width: 4; }
    .c-amber { stroke: #ae6326; } .c-sky { stroke: #56b2d6; } .c-teal { stroke: #4f979c; } .c-orange { stroke: #d6914a; }
    .c-pink { stroke: #b89ba0; } .c-silver { stroke: #a9adb2; } .c-red { stroke: #e0474c; } .c-slate { stroke: #4d5d7a; } .c-azure { stroke: #3763f6; }
    .ma { fill: none; stroke: #c23b40; stroke-width: 2; }
    .ema { fill: none; stroke: #5fae5a; stroke-width: 2; } .vwap { fill: none; stroke: #4a78d0; stroke-width: 6; opacity: 0.8; }
    .vol { fill: #2a45ad; } .volma { fill: none; stroke: #fbe95b; stroke-width: 2; stroke-linejoin: round; }
    .dim { opacity: 0.7; } .lit { opacity: 0.96; } .vp { fill: #c8466e; } .vg { fill: #5a9c52; }
    .np { fill: #632f82; } .nb { fill: #2c40b0; } .nr { fill: #7c3049; } .nt { fill: #2f6d72; }
    .bolt circle { fill: #0b0b0d; stroke: #9c4fc0; stroke-width: 3; } .bolt path { fill: #9c4fc0; }
    .mark { fill: #dbdbdb; }
    .tcyan { fill: #74f8fb; } .twhite { fill: #fff; } .tred { fill: #e0474c; } .tblue { fill: #3763f6; } .tgreen { fill: #63a85e; }
    .tyellow { fill: #fbe95b; } .torange { fill: #f09a33; } .tgrey { fill: #363843; }
    .tcyan-t, .twhite-t, .tyellow-t, .torange-t { fill: #0f0f0f; } .tred-t, .tblue-t, .tgreen-t, .tgrey-t { fill: #fff; }
    .sub { opacity: 0.8; }
    .plusbg { fill: #0f0f12; } .addmark { fill: none; stroke: #fff; stroke-width: 2; }
    .legend { position: absolute; left: 18px; top: 14px; display: flex; align-items: center; height: 36px; font: 400 27px/36px Inter, "Noto Sans CJK JP", sans-serif; color: #b2b5be; white-space: nowrap; }
    .coin { width: 36px; height: 36px; border-radius: 50%; background: #2c4f80; color: #fff; font-weight: 700; font-size: 16px; text-align: center; }
    .name { font-size: 30px; margin-left: 8px; }
    .flag { width: 24px; height: 24px; margin-left: 26px; fill: #3f7af5; }
    .live { width: 36px; height: 36px; border-radius: 50%; background: #21393d; margin-left: 24px; display: grid; place-items: center; }
    .live i { width: 16px; height: 16px; border-radius: 50%; background: #66bfae; }
    .vlabel { margin-left: 16px; font-size: 26px; } .val { margin-left: 3px; font-size: 26px; }
    .down { color: #e0474c; } .up { color: #6a9af5; } .plain { color: #fff; }
    .row2 { position: absolute; left: 17px; top: 62px; display: flex; align-items: center; gap: 31px; color: #dbdbdb; font: 400 26px/36px Inter, sans-serif; }
    .fold { display: flex; align-items: center; gap: 10px; height: 41px; padding: 0 9px 0 11px; border: 2px solid #3d3d3d; border-radius: 8px; }
    .fold svg { width: 18px; height: 10px; fill: none; stroke: #dbdbdb; stroke-width: 2; }
    .sync { width: 36px; height: 36px; border-radius: 50%; background: #352c50; display: grid; place-items: center; }
    .sync svg { width: 28px; height: 28px; fill: none; stroke: #ac88f5; stroke-width: 3; }
  `];

  render() {
    const p = this.pane;
    return html`
      <div class="grid">
        <div class="plot">
          <svg aria-hidden="true">${p.plot()}</svg>
          <div class="legend">
            <span class="coin">225</span>
            <span class="name">JP225YJPY · ${p.interval} · OANDA</span>
            <svg class="flag" viewBox="0 0 24 24"><path d="M2 0h22l-7 12l7 12h-22q-2 0 -2 -2v-20q0 -2 2 -2z"></path></svg>
            <span class="live"><i></i></span>
            <span class="vlabel">出来高</span><span class="val ${p.volCls}">${p.volume}</span>
          </div>
          ${p.count ? html`<div class="row2">
            <button class="fold"><svg viewBox="0 0 18 10"><path d="M1 1l8 7l8 -7"></path></svg>${p.count}</button>
            ${p.sync ? html`<button class="sync" aria-label="更新"><svg viewBox="0 0 28 28"><path d="M4 11a10.5 10.5 0 0 1 19 -1M24 17a10.5 10.5 0 0 1 -19 1M27 6l-3 7l-6 -3M1 22l3 -7l6 3"></path></svg></button>` : nothing}
          </div>` : nothing}
        </div>
        <div class="prices"><svg>
          ${p.prices.map((l) => text(14, l.at + 8, l.s))}
          ${p.pointer ? svg`<path class="tyellow" d="M0 ${p.pointer - 10}l13 10l-13 10z"></path>` : nothing}
          ${p.axisTags.map((t) => svg`<path class=${t.cls} d="M0 ${t.y}h107q5 0 5 5v${t.h - 10}q0 5 -5 5h-107z"></path>
            ${t.lines.map((s, i) => text(14, Math.round(t.y + t.h / 2) + 7 + (t.lines.length > 1 ? i * 23 - 12 : 0), s, `${t.cls}-t${i ? " sub" : ""}`))}`)}
        </svg></div>
        <div class="time"><svg>
          ${p.times.map((l) => text(l.at, 30, l.s, l.cls ?? "", "middle"))}
          <path class="tgrey" d="M${p.cursor.x} -2h${p.cursor.w}v37q0 5 -5 5h${10 - p.cursor.w}q-5 0 -5 -5z"></path>
          ${text(p.cursor.x + Math.round(p.cursor.w / 2), 29, p.cursor.s, "white f20", "middle")}
        </svg></div>
        <div class="corner">${p.gear ? html`<svg class="ic" viewBox="0 0 28 28">${hexagon}</svg>` : nothing}</div>
      </div>
      ${p.active ? html`<div class="frame"></div>` : nothing}`;
  }
}

/* ---------- icons ---------- */

const dot = (x: number, y: number) => svg`<circle cx=${x} cy=${y} r="2"></circle>`;
const icons: Record<string, unknown> = {
  cross: svg`<path d="M14 3v8M14 17v8M3 14h8M17 14h8"></path>`,
  trend: svg`${dot(5.5, 22.5)}${dot(22.5, 5.5)}<path d="M7 21L21 7"></path>`,
  fib: svg`<path d="M3 5h22M3 11h19.5M3 17h22M5.5 23h19.5"></path>${dot(24.5, 11)}${dot(3.5, 23)}`,
  pattern: svg`${dot(5.5, 22.5)}${dot(8.5, 6.5)}${dot(12.5, 13)}${dot(20.5, 6.5)}${dot(23.5, 20)}<path d="M6 20.5L8 8.5M9.5 8L11.5 11.5M7 21L11 14.5M14.5 12L19 7.5M21 8.5L23 18"></path>`,
  position: svg`${dot(5.5, 5.5)}${dot(5.5, 22)}<path d="M7.5 5.5h17.5M7.5 22h17.5M13.5 8.5v5.5h4"></path><path d="M5 17.5h20" stroke-dasharray="1 1"></path>`,
  rect: svg`${dot(5.5, 5.5)}${dot(22.5, 5.5)}${dot(5.5, 22.5)}${dot(22.5, 22.5)}<path d="M7.5 5.5h13M7.5 22.5h13M5.5 7.5v13M22.5 7.5v13"></path>`,
  type: svg`<path d="M7 8.5v-2.500h14v2.500M14 6v17M11.500 23.500h5"></path>`,
  heart: svg`<path d="M14 24.500L4.500 15.500C-0.500 10 6 1.500 14 8C22 1.500 28.500 10 23.500 15.500z"></path>`,
  ruler: svg`<path d="M2.500 20.500L20.500 2.500L25.500 7.500L7.500 25.500zM6 17l2.500 2.500M9 14l2 2M12 11l2.500 2.500M15 8l2 2M18 5l2.500 2.500"></path>`,
  zoom: svg`<circle cx="12.500" cy="12.500" r="8.500"></circle><path d="M18.500 18.500l4 4M12.500 9v7M9 12.500h7"></path>`,
  magnet: svg`<path d="M6 24v-12a8 8 0 0 1 16 0v12h-5v-11.500a3 3 0 0 0 -6 0v11.500zM6 20h5M17 20h5"></path>`,
  pencil: svg`<path d="M3 20.500v-4L15.500 4.500q3 -1.500 4 2L7.500 18.500L6 20.500zM14 6l4 4M4 16l3.500 3"></path><path d="M15.500 19h8v6h-8zM17.500 19v-1.500a2.500 2.500 0 0 1 5 0"></path><circle cx="19.500" cy="22" r=".5"></circle>`,
  lock: svg`<rect x="6" y="12.500" width="16" height="11" rx="1.500"></rect><path d="M9.500 12.500v-3a4.500 4.500 0 0 1 8.500 -2"></path><circle cx="14" cy="18" r="1"></circle>`,
  eye: svg`<path d="M3.500 14Q8.500 6.500 14 6.500T24.500 14Q19.500 21.500 14 21.500T3.500 14z"></path><circle cx="14" cy="14" r="4"></circle>`,
  link: svg`<path d="M11 12.500l3 -3L17.500 6a4.200 4.200 0 0 1 5.500 6l-4 4M17 16l-3.500 3.500l-2.500 2.500a4.200 4.200 0 0 1 -5.800 -6l4 -4M10.500 17.500l7 -7"></path>`,
  trash: svg`<path d="M5 8h18M7.500 8l1.500 14q.200 1.500 1.500 1.500h7q1.300 0 1.500 -1.500l1.500 -14M10.500 8v-1.500q0 -1.500 1.500 -1.500h4q1.500 0 1.500 1.500v1.500"></path>`,
  star: svg`<path d="M14 4l3 7l7.500 .700l-5.500 5l1.700 7.300l-6.700 -4l-6.700 4l1.700 -7.300l-5.500 -5l7.500 -.700z"></path>`,
  add: svg`<circle cx="14" cy="14" r="9"></circle><path d="M14 9.500v9M9.500 14h9"></path>`,
  candles: svg`<path d="M8 7.500h4v13h-4zM10 3.500v4M10 20.500v4M16.500 10.500h4v8h-4zM18.500 7v3.500M18.500 18.500v3"></path>`,
  hollow: svg`<path d="M6 10.500h4v8h-4zM8 6.500v4M8 18.500v3.500M14 7.500h8v13h-8zM18 3.500v4M18 20.500v4"></path>`,
  indicators: svg`<path d="M5 12l5 -6.500l4.500 4l8.500 -7M5.500 24.500v-6h4v6M9.500 24.500v-10h5v10M14.500 17h4M18.500 24.500v-13.500h4.500v13.500z M5.500 24.500h17"></path>`,
  grid: svg`<rect x="6" y="6" width="6" height="6" rx="1"></rect><rect x="16" y="6" width="6" height="6" rx="1"></rect><rect x="6" y="16" width="6" height="6" rx="1"></rect><rect x="16" y="16" width="6" height="6" rx="1"></rect>`,
  alarm: svg`<path d="M13.500 23a9 9 0 1 1 8 -8.500M13.500 9v5.500h-4M4 8l3.500 -3.500M19.500 4.500l3.500 3.500M20.500 17v8M16.500 21h8"></path>`,
  rewind: svg`<path d="M13 7.500v13l-6.500 -6.500zM22 7.500v13l-6.500 -6.500z"></path>`,
  undo: svg`<path d="M11 8.500l-4 4l4 4M7 12.500h8q6 0 6 7"></path>`,
  redo: svg`<path d="M17 8.500l4 4l-4 4M21 12.500h-8q-6 0 -6 7"></path>`,
  layout: svg`<rect x="4.500" y="6" width="19" height="16" rx="1.500"></rect><path d="M14 6v16M4.500 14h19"></path>`,
  quick: svg`<path d="M13 5a8.500 8.500 0 1 0 6.500 9M19 19l5 5M16.500 4l-5.500 9h4l-1.500 6l6 -8.500h-4z"></path>`,
  settings: hexagon,
  full: svg`<path d="M6 10.500v-4q0 -.500 .500 -.500h4M17.500 6h4q.500 0 .500 .500v4M22 17.500v4q0 .500 -.500 .500h-4M10.500 22h-4q-.500 0 -.500 -.500v-4"></path>`,
  camera: svg`<path d="M5 7.500h4.500l1.500 -2.500h6l1.500 2.500h4.500q1 0 1 1v12q0 1 -1 1h-18q-1 0 -1 -1v-12q0 -1 1 -1z"></path><circle cx="14" cy="14" r="4"></circle>`,
  badge: svg`<path d="M8.500 8.500h11l2 5l-7.500 7.500l-7.500 -7.500zM14 10.500v6M12.500 13h3v2h-3z"></path>`,
  calendar: svg`<path d="M8 14v-6q0 -1.500 1.500 -1.500h13q1.500 0 1.500 1.500v12.500q0 1.500 -1.500 1.500h-5M8 11h16M12.500 4v4M19.500 4v4M5 19h8M10 16l3 3l-3 3"></path>`,
  expand: svg`<path d="M16 8h7v7M12 21h-7v-7"></path>`,
  finder: svg`<path d="M6 13v-7q0 -2 2 -2h12q2 0 2 2v14q0 2 -2 2h-4M18 8v11"></path><circle cx="9.500" cy="17" r="4"></circle><path d="M12.500 20.500l3 3.500"></path>`,
};
const icon = (name: string) => html`<svg class="ic" viewBox="0 0 28 28" aria-hidden="true">${icons[name]}</svg>`;
const chevron = html`<svg class="chev" viewBox="0 0 18 10" aria-hidden="true"><path d="M1 1l8 7l8 -7"></path></svg>`;

const tools: (string | null)[] = ["cross", "trend", "fib", "pattern", "position", "rect", "type", "heart", null, "ruler", "zoom", null, "magnet", "pencil", "lock", "eye", "link", null, "trash"];

@customElement("app-root")
export class AppRoot extends LitElement {
  static styles = [base, css`
    :host { display: flex; flex-direction: column; height: 100vh; overflow: hidden; background: linear-gradient(#3a3424 112px, #6b7879 112px); color: #dbdbdb; padding-left: 3px; box-sizing: border-box; font: 400 27px/1 Inter, "Noto Sans CJK JP", sans-serif; }
    .win { flex: 1; min-height: 0; display: flex; flex-direction: column; border-left: 3px solid #444; border-radius: 20px 0 0 0; overflow: hidden; background: #2e2e2e; }
    .title { height: 72px; flex: none; position: relative; display: flex; align-items: center; justify-content: center; background: #262626; color: #fff; font-weight: 600; font-size: 23px; padding: 0 0 5px 80px; }
    .lights { position: absolute; left: 40px; top: 22px; display: flex; gap: 16px; }
    .lights button { width: 24px; height: 24px; border-radius: 50%; }
    .l1 { background: #ec6a5e; } .l2 { background: #f4bf4f; } .l3 { background: #61c554; }
    .finder { position: absolute; right: 18px; top: 9px; color: #fff; }
    .finder .ic { width: 50px; height: 50px; stroke-width: 1.5; }
    .bar { height: 75px; flex: none; display: flex; align-items: center; background: #0f0f0f; overflow: hidden; white-space: nowrap; }
    .ib { flex: none; width: 56px; height: 56px; display: grid; place-items: center; }
    .chev { width: 16px; height: 9px; fill: none; stroke: #dbdbdb; stroke-width: 2; }
    .cb { flex: none; width: 36px; height: 56px; display: grid; place-items: center; margin-left: 14px; }
    .ints + .cb { margin-left: 8px; }
    .sep { flex: none; width: 2px; height: 44px; background: #4a4a4a; margin: 0 18px 0 14px; }
    .avatar { position: relative; flex: none; width: 56px; height: 56px; border-radius: 50%; border: 3px solid #3a3a3a; background: #000; margin-left: 22px; }
    .avatar svg { width: 50px; height: 50px; fill: none; }
    .count { position: absolute; left: 39px; top: -9px; width: 32px; height: 32px; border-radius: 50%; background: #e0474c; color: #fff; font-size: 21px; line-height: 32px; text-align: center; }
    .pill { flex: none; width: 254px; height: 56px; margin: 0 17px 0 31px; border-radius: 28px; background: #3d3d3d; display: flex; align-items: center; padding: 0 3px 0 25px; font-weight: 600; }
    .sym { flex: 1; overflow: hidden; text-align: left; line-height: 40px; -webkit-mask-image: linear-gradient(90deg, #000 75%, transparent 96%); mask-image: linear-gradient(90deg, #000 75%, transparent 96%); }
    .gem { width: 48px; height: 48px; border-radius: 50%; background: #0f0f0f; display: grid; place-items: center; }
    .gem .ic { width: 48px; height: 48px; stroke-width: 1.300; }
    .add { margin-right: 6px; }
    .ints { display: flex; gap: 9px; margin-left: -3px; }
    .int { height: 67px; padding: 0 9px; border-radius: 12px; }
    .on { background: #3d3d3d; }
    .cbtn { flex: none; width: 67px; height: 67px; border-radius: 12px; display: grid; place-items: center; margin: 0 16px 0 -7px; }
    .letters { display: flex; gap: 12px; margin-left: 14px; margin-right: 12px; }
    .round { flex: none; width: 44px; height: 44px; border: 2px solid #4a4a4a; border-radius: 50%; font-size: 20px; text-align: center; }
    .g15 { margin-left: 15px; } .g19 { margin-left: 19px; }
    .off { color: #5c5c5c; }
    .right { margin-left: auto; display: flex; align-items: center; }
    .save { width: 84px; margin: 0 16px 0 31px; display: flex; flex-direction: column; align-items: center; gap: 5px; font-size: 27px; }
    .save small { font-size: 20px; color: #3763f6; }
    .j { margin: 0 14px 0 12px; }
    .trade { display: flex; align-items: center; width: 239px; height: 56px; margin: 0 16px 0 19px; border: 2px solid #4a4a4a; border-radius: 28px; }
    .trade .go { display: flex; align-items: center; gap: 12px; padding-left: 8px; width: 181px; height: 100%; border-right: 2px solid #4a4a4a; }
    .trade .go svg { width: 36px; height: 36px; }
    .trade .more { flex: 1; display: grid; place-items: center; height: 100%; }
    .pub { width: 30px; height: 56px; border-radius: 28px 0 0 28px; background: #f0f0f0; color: #0f0f0f; font-weight: 700; overflow: hidden; text-align: left; padding-left: 24px; }
    .body { flex: 1; min-height: 0; display: flex; padding-top: 8px; }
    .side { flex: none; width: 101px; background: #0f0f0f; border-radius: 0 8px 0 0; display: flex; flex-direction: column; align-items: center; gap: 7px; padding-top: 17px; overflow: hidden; }
    .tool { flex: none; width: 68px; height: 68px; border-radius: 12px; display: grid; place-items: center; }
    .lit, .star { background: #f0f0f0; color: #0f0f0f; }
    .star { margin: auto 0 -26px; }
    .rule { flex: none; width: 72px; height: 2px; background: #3d3d3d; margin: 11px 0 8px; }
    .main { flex: 1; min-width: 0; display: flex; flex-direction: column; margin: 0 8px; }
    .line { display: flex; min-height: 0; }
    .top { flex: 797 1 0; gap: 5px; margin-bottom: 4px; }
    .low { flex: 1176 1 0; gap: 3px; margin-bottom: 2px; }
    .w0 { flex: 1368 1 0; } .w1 { flex: 2594 1 0; } .w2 { flex: 1927 1 0; } .w3 { flex: 2037 1 0; }
    .foot { flex: none; height: 76px; display: flex; align-items: center; gap: 26px; padding: 0 17px 0 21px; background: #0f0f0f; border-radius: 8px; }
    .foot button { height: 56px; padding: 0 9px; }
    .foot .ranges { display: flex; gap: 10px; }
    .foot .sep { margin: 0 -8px; }
    .foot .clock { margin: 0 -21px 0 auto; }
    .foot .ib { padding: 0; margin-left: 14px; }
    .foot .goto { margin-left: -9px; }
    .under { flex: none; height: 7px; margin-top: 7px; background: #0f0f0f; border-radius: 8px 8px 0 0; }
    .dock { flex: none; width: 6px; background: #0f0f0f; border-radius: 8px 0 0 0; }
  `];

  render() {
    const chev = html`<button class="cb" aria-label="メニュー">${chevron}</button>`;
    const sep = html`<span class="sep"></span>`;
    return html`<div class="win">
      <header class="title">
        <div class="lights"><button class="l1" aria-label="閉じる"></button><button class="l2" aria-label="しまう"></button><button class="l3" aria-label="拡大"></button></div>
        <span>225 - JP225YJPY 69,511.7 ▲ +0.41% JP225</span>
        <button class="finder" aria-label="検索">${icon("finder")}</button>
      </header>
      <nav class="bar">
        <button class="avatar" aria-label="アカウント"><svg viewBox="0 0 50 50"><path stroke="#222" d="M12 4v42M25 0v50M38 4v42M3 15h44M0 35h50"></path><path stroke="#51427c" stroke-width="2" d="M1 32h48"></path><path stroke="#c0562c" stroke-width="1" d="M14 45l4 -3l3 -18l2 -20l3 1"></path><path stroke="#7ba3c4" stroke-width="1" d="M28 4l4 3l3 8l2 2l4 12"></path></svg><span class="count">5</span></button>
        <button class="pill"><span class="sym">JP225YJPY</span><span class="gem">${icon("badge")}</span></button>
        <button class="ib add" aria-label="追加">${icon("add")}</button>${sep}
        <div class="ints">${["15秒", "2分", "10分", "30分", "1時間", "4時間", "日", "週", "月", "3分"].map((t) => html`<button class="int ${t === "30分" ? "on" : ""}">${t}</button>`)}</div>
        ${chev}${sep}
        <button class="cbtn on" aria-label="ローソク足">${icon("candles")}</button>
        <button class="ib" aria-label="中空ローソク足">${icon("hollow")}</button>${chev}${sep}
        <button class="ib" aria-label="インジケーター">${icon("indicators")}</button>${chev}
        <button class="ib g15" aria-label="テンプレート">${icon("grid")}</button>
        <div class="letters">${[..."024DMWFPOC個VZ"].map((t) => html`<button class="round">${t}</button>`)}</div>${sep}
        <button class="ib" aria-label="アラート">${icon("alarm")}</button>
        <button class="ib g19" aria-label="リプレイ">${icon("rewind")}</button>${chev}${sep}
        <button class="ib" aria-label="元に戻す">${icon("undo")}</button>
        <button class="ib g19 off" aria-label="やり直す">${icon("redo")}</button>
        <div class="right">
          <button class="ib" aria-label="レイアウト">${icon("layout")}</button>
          <button class="save"><span>JP225</span><small>保存</small></button>${chev}
          <button class="round j">J</button>${sep}
          <button class="ib" aria-label="クイック検索">${icon("quick")}</button>
          <button class="ib g19" aria-label="設定">${icon("settings")}</button>
          <button class="ib g19" aria-label="全画面">${icon("full")}</button>
          <button class="ib g19" aria-label="スナップショット">${icon("camera")}</button>
          <div class="trade">
            <button class="go"><svg viewBox="0 0 36 36"><circle cx="18" cy="18" r="18" fill="#f0f0f0"></circle><path fill="#0f0f0f" d="M6 12h11v13h-5v-8h-6zM24 12h7l-5 13h-7z"></path><circle cx="20.500" cy="14.500" r="2.500" fill="#0f0f0f"></circle></svg>トレード</button>
            <button class="more" aria-label="トレードメニュー">${chevron}</button>
          </div>
          <button class="pub">投</button>
        </div>
      </nav>
      <div class="body">
        <aside class="side">
          ${tools.map((t) => t ? html`<button class="tool ${t === "cross" ? "on" : t === "link" ? "lit" : ""}" aria-label=${t}>${icon(t)}</button>` : html`<span class="rule"></span>`)}
          <button class="tool star" aria-label="お気に入り">${icon("star")}</button>
        </aside>
        <main class="main">
          <div class="line top"><chart-pane class="w0" .pane=${panes[0]}></chart-pane><chart-pane class="w1" .pane=${panes[1]}></chart-pane></div>
          <div class="line low"><chart-pane class="w2" .pane=${panes[2]}></chart-pane><chart-pane class="w3" .pane=${panes[3]}></chart-pane></div>
          <footer class="foot">
            <div class="ranges">${["1日", "5日", "1ヶ月", "3ヶ月", "6ヶ月", "年初来", "1年", "5年", "すべて"].map((t) => html`<button>${t}</button>`)}</div>
            <span class="sep"></span>
            <button class="ib goto" aria-label="日付へ移動">${icon("calendar")}</button>
            <button class="clock">08:56:33 UTC+9</button><span class="sep"></span>
            <button class="ib" aria-label="最大化">${icon("expand")}</button>
          </footer>
          <div class="under"></div>
        </main>
        <div class="dock"></div>
      </div>
    </div>`;
  }
}
